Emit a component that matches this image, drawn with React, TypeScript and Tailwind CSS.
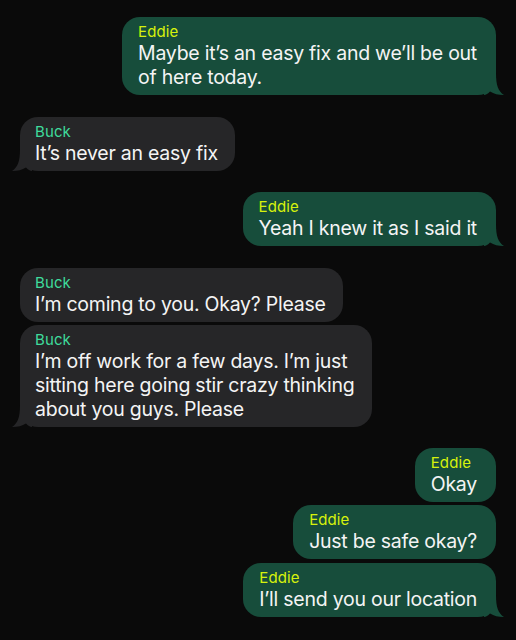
import React from "react";

type Msg = { who: "Eddie" | "Buck"; lines: string[]; tail: boolean; gap: number };

const msgs: Msg[] = [
  { who: "Eddie", lines: ["Maybe it\u2019s an easy fix and we\u2019ll be out", "of here today."], tail: true, gap: 0 },
  { who: "Buck", lines: ["It\u2019s never an easy fix"], tail: true, gap: 22 },
  { who: "Eddie", lines: ["Yeah I knew it as I said it"], tail: true, gap: 21 },
  { who: "Buck", lines: ["I\u2019m coming to you. Okay? Please"], tail: false, gap: 22 },
  { who: "Buck", lines: ["I\u2019m off work for a few days. I\u2019m just", "sitting here going stir crazy thinking", "about you guys. Please"], tail: true, gap: 3 },
  { who: "Eddie", lines: ["Okay"], tail: false, gap: 21 },
  { who: "Eddie", lines: ["Just be safe okay?"], tail: false, gap: 3 },
  { who: "Eddie", lines: ["I\u2019ll send you our location"], tail: true, gap: 4 },
];

function Tail({ right, color }: { right: boolean; color: string }) {
  return (
    <svg
      width="20"
      height="22"
      viewBox="0 0 20 22"
      className={right ? "absolute bottom-0 right-[-8px]" : "absolute bottom-0 left-[-8px] -scale-x-100"}
    >
      <path d="M0,0 H12 C12,12 14,18 20,22 C14,22 10,21 6,18.5 C4,20.5 2,22 0,22 Z" fill={color} />
    </svg>
  );
}

export default function App() {
  return (
    <div
      className="w-[516px] h-[640px] bg-[#0a0a0a] overflow-hidden flex flex-col px-5 pt-[17px]"
      style={{ fontFamily: "Inter, 'Noto Sans', sans-serif" }}
    >
      {msgs.map((m, i) => {
        const me = m.who === "Eddie";
        const bg = me ? "#174d3b" : "#262628";
        return (
          <div
            key={i}
            className={me ? "flex justify-end" : "flex justify-start"}
            style={{ marginTop: m.gap }}
          >
            <div
              className={
                me
                  ? "relative rounded-[18px] bg-[#174d3b] pl-4 pr-[19px] pt-[6px] pb-[6px]"
                  : "relative rounded-[18px] bg-[#262628] pl-[15px] pr-[17px] pt-[6px] pb-[6px]"
              }
            >
              {m.tail && <Tail right={me} color={bg} />}
              <div
                className={
                  me
                    ? "relative text-[15px] leading-[18px] text-[#d6f20c] tracking-[0.1px]"
                    : "relative text-[15px] leading-[18px] text-[#3fdc9c] tracking-[0.1px]"
                }
              >
                {m.who}
              </div>
              <div className="relative text-[19.5px] leading-[24px] text-[#f4f4f4] whitespace-nowrap tracking-[-0.25px]">
                {m.lines.map((l, j) => (
                  <div key={j}>{l}</div>
                ))}
              </div>
            </div>
          </div>
        );
      })}
    </div>
  );
}
